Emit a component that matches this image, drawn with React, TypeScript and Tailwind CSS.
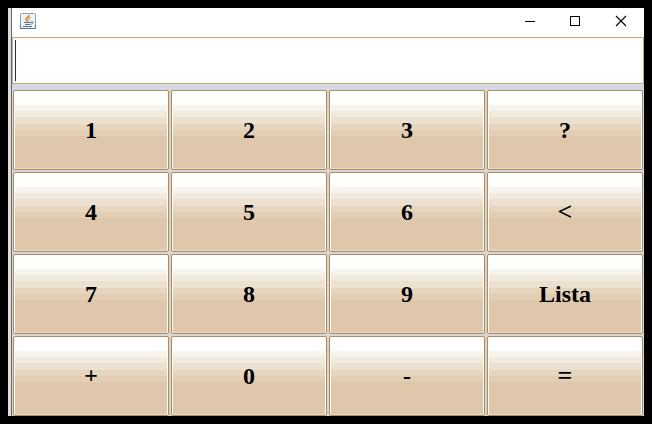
const keys = ['1', '2', '3', '?', '4', '5', '6', '<', '7', '8', '9', 'Lista', '+', '0', '-', '='];

const edgeShadow =
  'shadow-[inset_1px_0_0_#fffdf7,inset_-1px_0_0_#fffdf7,inset_0_-1px_0_#f2d9b5]';
const innerShadow =
  'shadow-[inset_1px_0_0_#fffdf7,inset_-1px_0_0_#fffdf7,inset_0_-1px_0_#f2d9b5,2px_0_0_0_#e2d1bd]';

function labelStyle(k: string) {
  if (k === '+') return 'pb-[3px] text-2xl';
  if (k === '=') return 'pb-[2px] text-[26px]';
  if (k === '<') return 'pb-px text-[26px]';
  return 'pb-px text-2xl';
}

function JavaIcon() {
  return (
    <svg width="16" height="16" viewBox="0 0 16 16" fill="none">
      <rect x="0.5" y="0.5" width="15" height="15" rx="1" fill="#eef2f5" stroke="#8b9fb2" />
      <path d="M0.5 12v3.500h15V12" stroke="#56758f" />
      <path d="M9 2C10 4 6 4.500 6 6.200C6 7.300 7.500 7.600 7.500 8.800" stroke="#dc7d2c" strokeWidth="1.500" />
      <path d="M10.500 4.300C8.200 5.200 8 6.300 9 7.800" stroke="#e99c50" strokeWidth="1.300" />
      <path d="M4 9.500h7M5 11.500h5M3 13.500h9" stroke="#52758f" strokeWidth="1.100" />
      <path d="M11 9c2.800-1 2.500 1.800-.5 2.300" stroke="#52758f" />
    </svg>
  );
}

export default function App() {
  return (
    <div className="h-[424px] w-[652px] overflow-hidden bg-black p-2">
      <div className="flex h-[408px] w-[636px]">
        <div className="w-[3px] shrink-0 bg-[#dedede]" />
        <div className="w-px shrink-0 bg-[#696662]" />
        <div className="flex w-[632px] flex-col bg-[#d8d6d7]">
          <div className="flex h-[29px] items-start bg-white">
            <div className="flex-1 pt-[5px] pl-2"><JavaIcon /></div>
            <svg width="46" height="29" shapeRendering="crispEdges"><path d="M17 13.500h10" stroke="#000" /></svg>
            <svg width="45" height="29" shapeRendering="crispEdges"><rect x="16.500" y="8.500" width="9" height="9" fill="none" stroke="#000" /></svg>
            <svg width="45" height="29"><path d="M17 8l10 10M27 8l-10 10" stroke="#000" strokeWidth="1.100" /></svg>
          </div>
          <div className="h-[47px] border border-[#c4ae8c] bg-white py-0.5 pl-0.5 shadow-[inset_0_0_0_1px_#fff9e8]">
            <div className="h-[41px] w-px bg-[#12306e]" />
          </div>
          <div className="h-1.5 bg-[#d6d9e2]" />
          <div className="grid grid-cols-[repeat(4,156px)] grid-rows-[repeat(4,80px)] gap-0.5 pl-px">
            {keys.map((k, i) => (
              <button
                key={k}
                className={`flex items-center justify-center rounded-[2px] border border-[#a68d70] bg-[linear-gradient(to_bottom,#fefefd_14px,#f7f4ee_14px_20px,#f2eadf_20px_26px,#ece0d0_26px_33px,#e6d6c0_33px_39px,#e2ceb4_39px_45px,#dec7ab_45px)] font-['Liberation_Serif',serif] font-bold text-black ${labelStyle(k)} ${i % 4 === 3 ? edgeShadow : innerShadow}`}
              >
                {k}
              </button>
            ))}
          </div>
        </div>
      </div>
    </div>
  );
}
